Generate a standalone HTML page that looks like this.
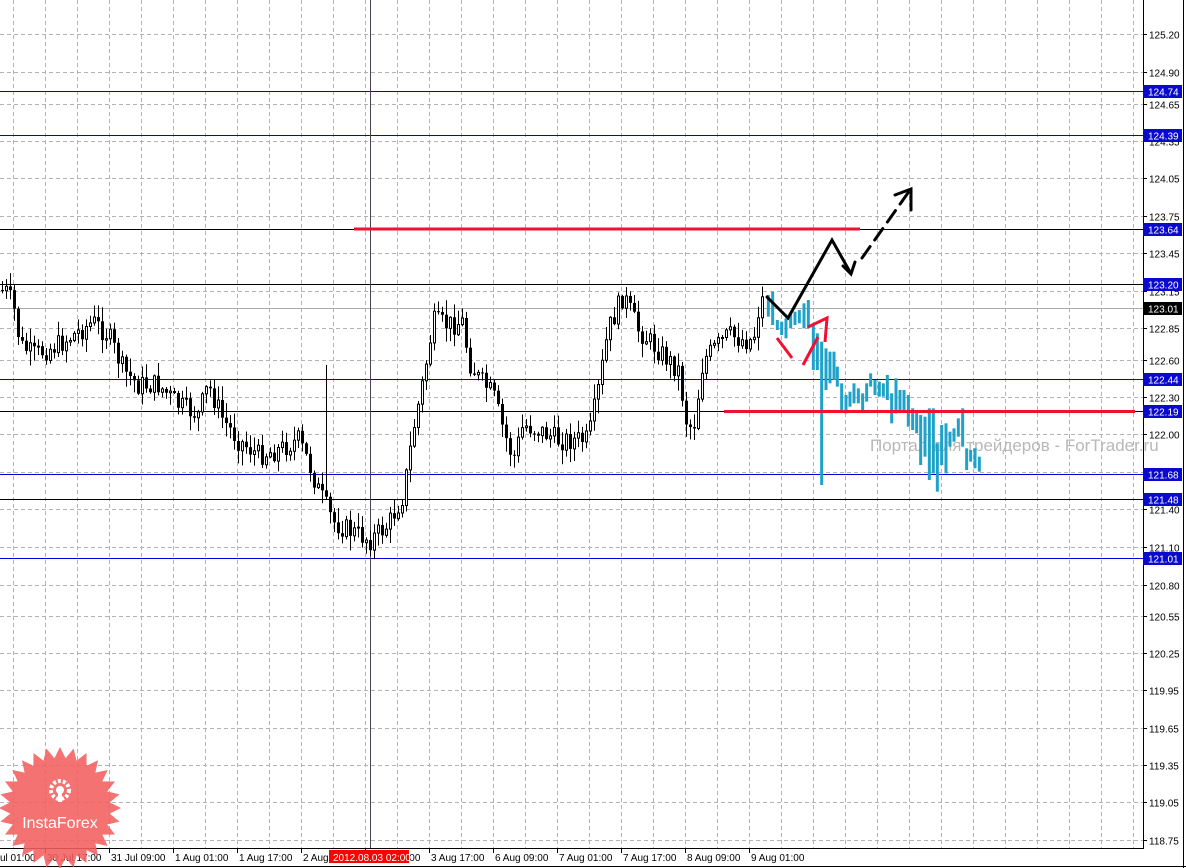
<!DOCTYPE html>
<html><head><meta charset="utf-8"><style>
html,body{margin:0;padding:0;background:#fff;}
svg{display:block;font-family:"Liberation Sans",sans-serif;}
</style></head><body>
<svg id="c" width="1186" height="868" xmlns="http://www.w3.org/2000/svg">
<rect width="1186" height="868" fill="#fff"/>
<g id="grid"></g>
<g id="hl"></g>
<line x1="370.5" y1="0" x2="370.5" y2="848" stroke="#445" stroke-width="1"/>
<text x="870" y="451" font-size="17" fill="#b8b8b8">Портал для трейдеров - ForTrader.ru</text>
<g id="candles"></g>
<g id="cyan" fill="#1ea2c9"></g>
<line x1="354" y1="229" x2="860" y2="229" stroke="#f01030" stroke-width="3"/>
<line x1="724" y1="411.5" x2="1135" y2="411.5" stroke="#f01030" stroke-width="3"/>
<g stroke="#000" stroke-width="3" fill="none" stroke-linecap="round">
<polyline points="767,297 788,318 832,240 850,272"/>
<polyline points="843,266 851,274 855,262"/>
<line x1="862" y1="258" x2="910" y2="190" stroke-dasharray="14,8"/>
<polyline points="895,195 911,189 911,210"/>
</g>
<g stroke="#f01030" stroke-width="3" fill="none">
<line x1="777" y1="338" x2="792" y2="358"/>
<line x1="803" y1="365" x2="818" y2="337"/>
<polyline points="808,327 827,318 825,342"/>
</g>
<line x1="1143.5" y1="0" x2="1143.5" y2="849" stroke="#000"/>
<line x1="0" y1="848.5" x2="1144" y2="848.5" stroke="#000"/>
<line x1="1183.5" y1="0" x2="1183.5" y2="868" stroke="#000"/>
<line x1="0" y1="866.5" x2="1186" y2="866.5" stroke="#000"/>
<g id="axis" font-size="10"></g>
<g id="logo">
<polygon id="star" fill="#f25f5f" fill-opacity="0.88"/>
<g fill="#fff">
<circle cx="60" cy="790" r="9" fill="none" stroke="#fff" stroke-width="4" stroke-dasharray="3,2"/>
<circle cx="60" cy="790" r="4"/>
<rect x="58" y="790" width="4" height="12"/>
</g>
<text x="60" y="828" font-size="16" fill="#fff" text-anchor="middle">InstaForex</text>
</g>
</svg>
<script>
var NS="http://www.w3.org/2000/svg";
function el(p,t,a,txt){var e=document.createElementNS(NS,t);for(var k in a)e.setAttribute(k,a[k]);if(txt!=null)e.textContent=txt;document.getElementById(p).appendChild(e);return e;}
for(var x=13.5;x<1143;x+=32) el("grid","line",{x1:x,y1:0,x2:x,y2:848,stroke:"#b8b0b8","stroke-dasharray":"4,3"});
var labs=[125.20,124.90,124.65,124.35,124.05,123.75,123.45,123.15,122.85,122.60,122.30,122.00,121.70,121.40,121.10,120.80,120.55,120.25,119.95,119.65,119.35,119.05,118.75];
var lys=[34,72,104,141,178,216,253,291,328,360,397,434,472,509,547,585,616,653,690,728,765,802,840];
labs.forEach(function(p,i){var y=lys[i]+0.5;el("grid","line",{x1:0,y1:y,x2:1143,y2:y,stroke:"#b8b0b8","stroke-dasharray":"4,3"});
el("axis","line",{x1:1143,y1:y,x2:1147,y2:y,stroke:"#000"});el("axis","text",{x:1149,y:y+4,fill:"#000"},p.toFixed(2));});
[[124.74,91.5,"#0000dd"],[124.39,135.5,"#0000dd"],[123.64,229.5,"#000"],[123.20,284.5,"#000"],[123.01,308.5,"#aaa"],[122.44,379.5,"#0000dd"],[122.19,411.5,"#000"],[121.68,474.5,"#0000dd"],[121.48,499.5,"#000"],[121.01,558.5,"#0000dd"]].forEach(function(h){
el("hl","line",{x1:0,y1:h[1],x2:1143,y2:h[1],stroke:h[2]});
el("axis","rect",{x:1143,y:h[1]-6.5,width:39,height:13,fill:h[2]=="#aaa"?"#000":"#0a0acc"});
el("axis","text",{x:1148,y:h[1]+4,fill:"#fff"},h[0].toFixed(2));});
var tl=[[-2,"ul 01:00"],[45,"30 Jul 17:00"],[109,"31 Jul 09:00"],[173,"1 Aug 01:00"],[237,"1 Aug 17:00"],[301,"2 Aug 09:00"],[365,"3 Aug 01:00"],[429,"3 Aug 17:00"],[493,"6 Aug 09:00"],[557,"7 Aug 01:00"],[621,"7 Aug 17:00"],[685,"8 Aug 09:00"],[749,"9 Aug 01:00"]];
tl.forEach(function(t){el("axis","line",{x1:t[0]+0.5,y1:848,x2:t[0]+0.5,y2:853,stroke:"#000"});el("axis","text",{x:t[0]+2,y:861,fill:"#000"},t[1]);});
el("axis","rect",{x:329,y:850,width:80,height:13,fill:"#f00"});
el("axis","text",{x:333,y:861,fill:"#fff"},"2012.08.03 02:00");
var kp=[[0,290],[8,292],[15,305],[22,345],[35,355],[60,345],[95,322],[110,335],[125,370],[140,385],[160,385],[180,405],[200,415],[210,385],[225,420],[240,440],[260,455],[280,450],[300,440],[310,462],[320,490],[335,522],[350,530],[372,540],[390,525],[405,495],[415,430],[425,380],[435,322],[450,325],[465,322],[470,360],[480,378],[495,395],[505,430],[515,460],[525,425],[540,430],[560,440],[575,440],[590,440],[600,390],[610,330],[625,295],[640,330],[655,345],[670,360],[680,370],[688,420],[695,430],[705,360],[715,350],[730,335],[745,340],[755,340],[762,300]];
function f(x){for(var i=1;i<kp.length;i++){if(x<=kp[i][0]){var a=kp[i-1],b=kp[i];return a[1]+(b[1]-a[1])*(x-a[0])/(b[0]-a[0]);}}return 300;}
var s=7;function r(){s=(s*9301+49297)%233280;return s/233280;}
var prev=f(0);
for(var x=1;x<764;x+=4){var c=f(x+3)+(r()-0.5)*22;var o=prev;var hi=Math.min(o,c)-r()*14-1,lo=Math.max(o,c)+r()*14+1;
if(x>=322&&x<328){hi=365;lo=500;}
el("candles","line",{x1:x+1.5,y1:hi,x2:x+1.5,y2:lo,stroke:"#000"});
var t=Math.min(o,c),h=Math.max(Math.abs(c-o),1);
if(c<o) el("candles","rect",{x:x+0.5,y:t,width:2,height:h,fill:"#fff",stroke:"#000"});
else el("candles","rect",{x:x,y:t,width:3,height:h,fill:"#000"});
prev=c;}
var cb=[[205,45,110],[218,35,135],[232,120,150],[245,125,165],[258,115,175],[272,100,145],[285,95,135],[298,90,130],[312,70,145],[325,60,145],[340,135,270],[352,160,270],[365,185,615],[378,205,330],[390,215,310],[402,215,300],[412,260,320],[425,310,390],[438,345,400],[450,335,380],[462,310,370],[475,325,370],[488,340,390],[500,310,365],[512,280,320],[525,300,345],[538,305,350],[550,310,350],[562,285,360],[575,340,430],[588,295,400],[600,330,390],[612,330,390],[625,345,440],[638,385,450],[650,395,460],[662,405,555],[675,410,530],[688,385,600],[700,385,580],[712,490,635],[725,435,555],[738,430,580],[750,455,500],[762,445,485],[775,415,470],[788,385,500],[800,505,570],[812,510,545],[825,505,565],[838,530,575]];
cb.forEach(function(b){var x=700+b[0]/3,y1=280+b[1]/3,y2=280+b[2]/3;el("cyan","rect",{x:x-1.5,y:y1,width:3,height:y2-y1});});
var pts=[],n=28;for(var i=0;i<2*n;i++){var R=i%2?50:61,a=Math.PI*i/n;pts.push((60+R*Math.cos(a)).toFixed(1)+","+(808+R*Math.sin(a)).toFixed(1));}
document.getElementById("star").setAttribute("points",pts.join(" "));
</script>
</body></html>
